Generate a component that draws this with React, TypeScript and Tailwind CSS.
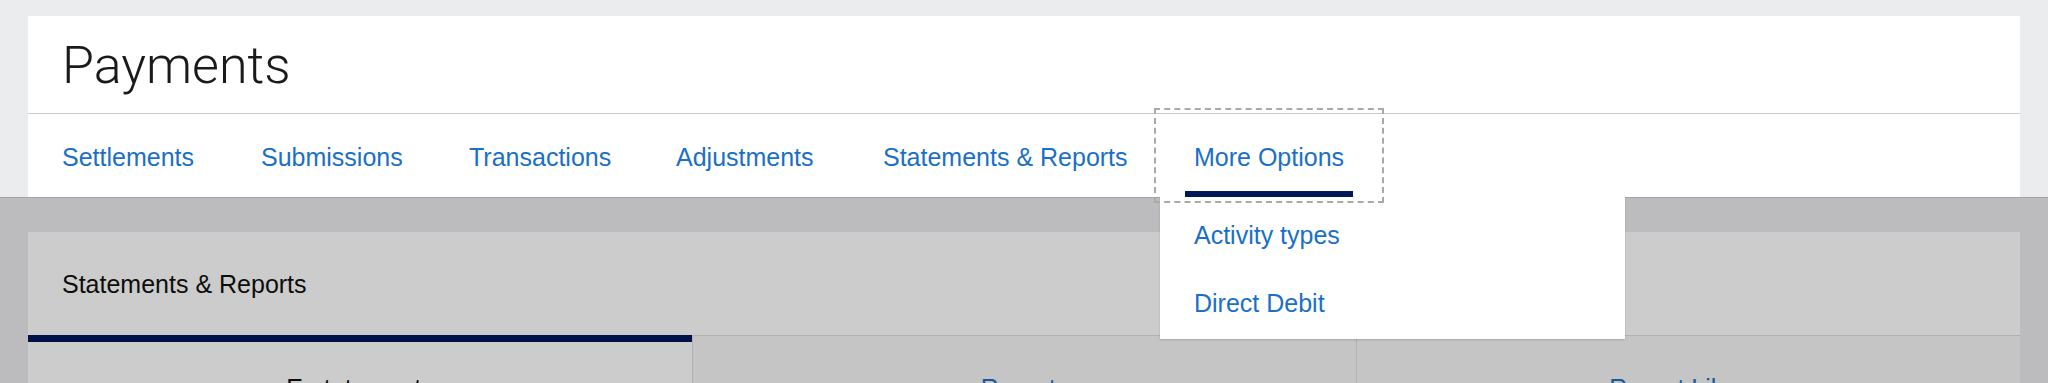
import React from "react";

const navItems = [
  { label: "Settlements", w: "w-[199px]" },
  { label: "Submissions", w: "w-[208px]" },
  { label: "Transactions", w: "w-[207px]" },
  { label: "Adjustments", w: "w-[207px]" },
  { label: "Statements & Reports", w: "w-[277px]" },
];

export default function App() {
  return (
    <div
      className="relative h-[383px] w-[2048px] overflow-hidden bg-[#ebecee]"
      style={{ fontFamily: '"Liberation Sans", Arial, sans-serif' }}
    >
      <div className="px-[28px] pt-[16px]">
        <header className="relative z-20 bg-white">
          <div className="flex h-[98px] items-center border-b border-[#c8c8c8] px-[34px] pt-[3px]">
            <h1
              className="text-[52px] font-light leading-none text-[#1a1a1a]"
              style={{ fontFamily: 'Roboto, "Liberation Sans", sans-serif' }}
            >
              Payments
            </h1>
          </div>
          <nav className="flex h-[83px] items-stretch pl-[34px] text-[25px] text-[#1a6fc6]">
            {navItems.map((it) => (
              <a key={it.label} href="#" className={`flex items-center pt-[4px] ${it.w}`}>
                <span className="whitespace-nowrap">{it.label}</span>
              </a>
            ))}
            <div className="relative flex">
              <button className="relative z-30 flex items-center px-[34px] pt-[4px] text-[#1a6fc6] outline-2 outline-offset-[4px] outline-dashed outline-[#a9a9a9]">
                <span className="whitespace-nowrap">More Options</span>
                <span className="absolute bottom-0 left-[25px] right-[25px] h-[6px] bg-[#00175a]" />
              </button>
              <div className="absolute left-0 top-full z-20 w-[465px] bg-white pb-[1px] pt-[4px] shadow-[0_1px_2px_rgba(0,0,0,0.15)]">
                <a href="#" className="flex h-[69px] items-center px-[34px] text-[25px] text-[#1a6fc6]">
                  Activity types
                </a>
                <a href="#" className="flex h-[68px] items-center px-[34px] text-[25px] text-[#1a6fc6]">
                  Direct Debit
                </a>
              </div>
            </div>
          </nav>
        </header>

        <main className="pt-[35px]">
          <section className="bg-white">
            <div className="flex h-[103px] items-center px-[34px] pt-[2px] text-[25px] text-[#111]">
              Statements &amp; Reports
            </div>
            <div className="grid grid-cols-3 text-[25px]">
              <div className="h-[110px] border-t-[7px] border-[#00175a] bg-white pt-[28px] text-center text-[#111]">
                E-statements
              </div>
              <div className="h-[110px] border-l border-t border-[#dedede] bg-[#f7f7f7] pt-[34px] text-center text-[#1a6fc6]">
                Reports
              </div>
              <div className="h-[110px] border-l border-t border-[#dedede] bg-[#f7f7f7] pt-[34px] text-center text-[#1a6fc6]">
                Report Library
              </div>
            </div>
          </section>
        </main>
      </div>

      <div className="absolute inset-x-0 bottom-0 top-[197px] z-10 border-t border-[#a3a3a3] bg-black/20" />
    </div>
  );
}
